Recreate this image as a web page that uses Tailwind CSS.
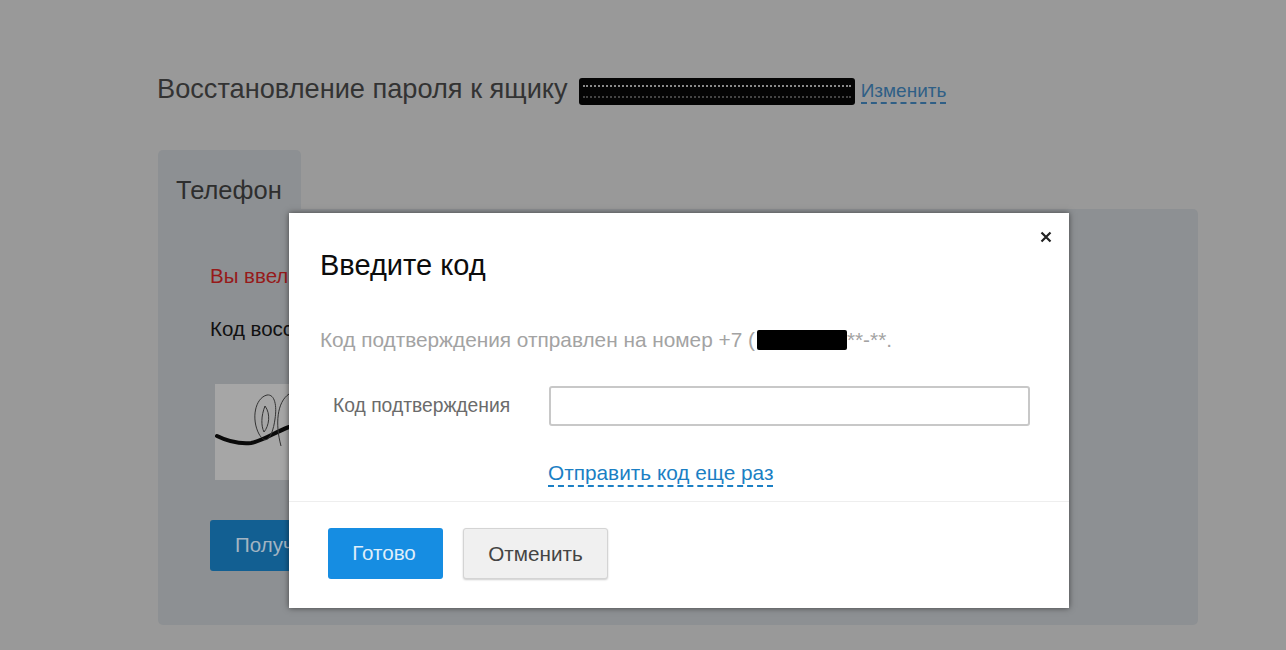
<!DOCTYPE html>
<html lang="ru">
<head>
  <meta charset="UTF-8" />
  <title>Восстановление пароля</title>
  <script src="https://cdn.jsdelivr.net/npm/@tailwindcss/browser@4"></script>
</head>
<body class="relative w-[1286px] h-[650px] overflow-hidden bg-[#999999] font-['Liberation_Sans',Arial,sans-serif]">

  <!-- Page behind the overlay -->
  <div class="pl-[157px] pt-[73px]">
    <div class="flex items-center h-[32px]">
      <h1 class="text-[27.2px] leading-[32px] text-[#333333] whitespace-nowrap">Восстановление пароля к ящику</h1>
      <div class="ml-[11px] w-[276px] h-[27px] mt-[5px] bg-[#050505] rounded-[3px] flex flex-col justify-center gap-[9px] px-[4px]">
        <div class="border-t-2 border-dotted border-[#8a8a8a]"></div>
        <div class="border-t-2 border-dotted border-[#444444]"></div>
      </div>
      <a class="ml-[6px] mt-[4px] text-[19px] leading-[23px] text-[#2f5f86] border-b-2 border-dashed border-[#2f5f86]">Изменить</a>
    </div>

    <div class="ml-[1px] mt-[45px] w-[143px] h-[59px] bg-[#8d9093] rounded-t-[5px] pl-[18px] pt-[24px] text-[25.5px] leading-[32px] text-[#2e2e2e]">Телефон</div>
    <div class="ml-[1px] w-[1040px] h-[416px] bg-[#8d9093] rounded-b-[5px] rounded-tr-[5px] pl-[52px] pt-[55px]">
      <p class="text-[20.5px] leading-[24px] text-[#961a1a] whitespace-nowrap">Вы ввели</p>
      <p class="mt-[29px] text-[20.5px] leading-[24px] text-[#111111] whitespace-nowrap">Код восстановления</p>
      <div class="mt-[43px] ml-[5px] w-[140px] h-[96px] bg-[#a6a6a6] flex items-center">
        <svg width="140" height="96" viewBox="0 0 140 96" fill="none">
          <path d="M2 52C14 58 24 60 36 59C48 57 60 48 74 43" stroke="#0a0a0a" stroke-width="4" stroke-linecap="round" />
          <path d="M44 50C36 35 40 14 52 11C60 10 62 22 60 35C58 50 52 64 44 50ZM50 22C46 32 46 42 49 48C54 42 56 30 50 22Z" stroke="#333333" stroke-width="1" />
          <path d="M74 10C62 18 60 40 66 62" stroke="#333333" stroke-width="1" />
        </svg>
      </div>
      <div class="mt-[40px] w-[150px] h-[51px] bg-[#125f92] rounded-[3px] pl-[25px] text-[20.5px] leading-[49px] text-[#a3b4c2]">Получить</div>
    </div>
  </div>

  <!-- Modal -->
  <div class="absolute left-[289px] top-[213px] w-[780px] h-[395px] bg-white shadow-[0_0_6px_rgba(0,0,0,0.55)]">
    <div class="relative h-[288px] pl-[31px]">
      <svg class="absolute right-[17px] top-[18px]" width="12" height="12" viewBox="0 0 12 12" fill="none">
        <path d="M1.5 1.5L10.5 10.5M10.5 1.5L1.5 10.5" stroke="#222222" stroke-width="2.2" />
      </svg>
      <h2 class="pt-[35px] text-[29px] leading-[34px] text-[#0c0c0c]">Введите код</h2>
      <p class="flex items-center mt-[44px] h-[28px] text-[20.8px] text-[#a3a3a3] whitespace-nowrap">
        <span>Код подтверждения отправлен на номер +7 (</span>
        <span class="inline-block w-[90px] h-[20px] ml-[2px] bg-black rounded-[2px]"></span>
        <span>**-**.</span>
      </p>
      <div class="flex items-center mt-[32px] h-[40px]">
        <label class="ml-[13px] w-[216px] text-[19.3px] text-[#6b6b6b] whitespace-nowrap">Код подтверждения</label>
        <input type="text" class="w-[481px] h-[40px] bg-white border-2 border-[#c8c8c8] rounded-[3px]" />
      </div>
      <div class="mt-[35px] ml-[228px] flex">
        <a class="text-[20.8px] leading-[24px] text-[#1b7fc4] border-b-2 border-dashed border-[#1b7fc4] whitespace-nowrap">Отправить код еще раз</a>
      </div>
    </div>
    <div class="h-[107px] border-t border-[#eeeeee] pl-[39px] pt-[26px] flex gap-[20px] items-start">
      <button class="w-[115px] h-[51px] pr-[3px] bg-[#168de2] rounded-[3px] text-[20.6px] text-[#dfeefa]">Готово</button>
      <button class="w-[145px] h-[51px] bg-[#f0f0f0] border border-[#d4d4d4] rounded-[3px] shadow-[0_1px_2px_rgba(0,0,0,0.2)] text-[20.7px] text-[#444444]">Отменить</button>
    </div>
  </div>
</body>
</html>
